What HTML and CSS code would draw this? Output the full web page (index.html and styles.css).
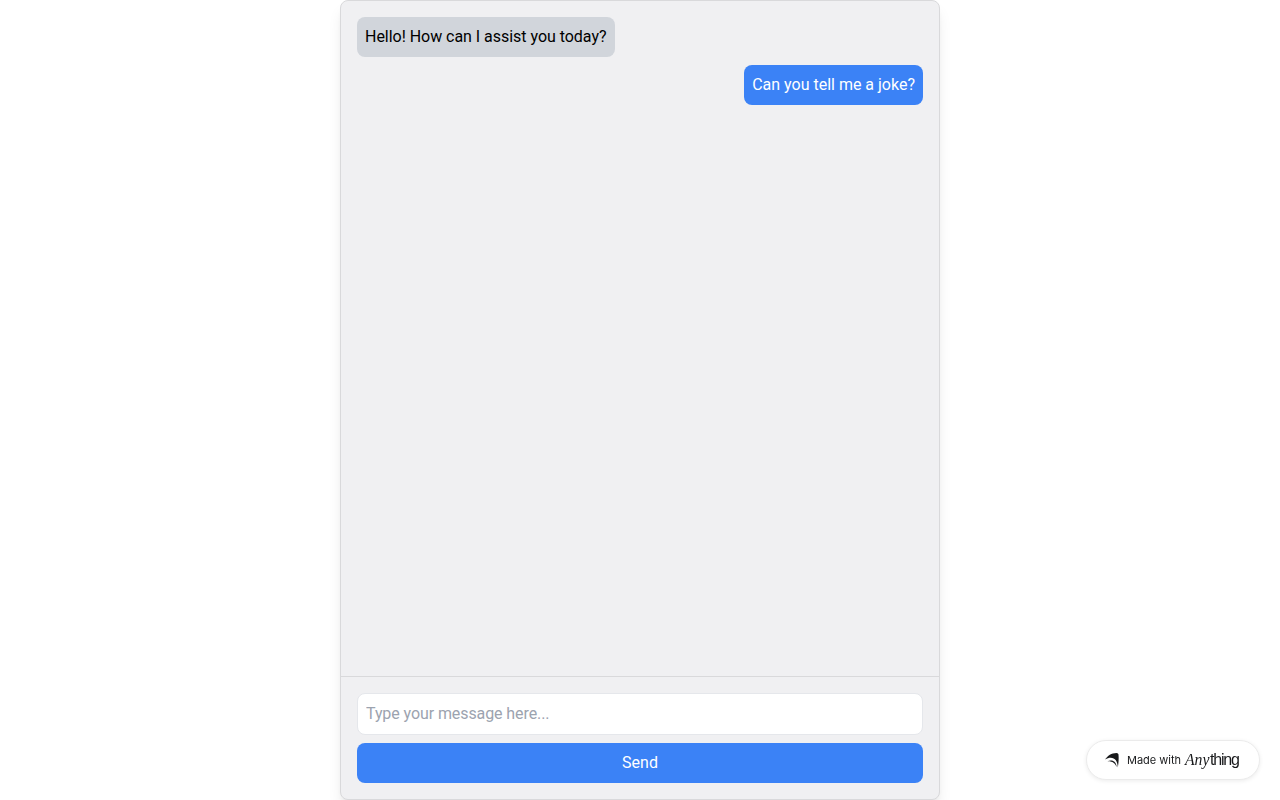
FILE: index.html
```html
<!DOCTYPE html>
<html lang="en">
<head>
  <meta charset="utf-8">
  <title>Chat</title>
  <link rel="stylesheet" href="styles.css">
</head>
<body>
  <div class="chat">
    <div class="messages">
      <div class="message bot">Hello! How can I assist you today?</div>
      <div class="message user">Can you tell me a joke?</div>
    </div>
    <form class="composer" onsubmit="return false">
      <input class="composer-input" type="text" placeholder="Type your message here...">
      <button class="send" type="submit">Send</button>
    </form>
  </div>

  <a class="badge" href="#">
    <svg class="badge-icon" width="14" height="15" viewBox="0 0 14 15" fill="#18191b">
      <path d="M0 6.6C2.6 2.8 6.5 0 11.5 0Q13.4 0 13.5 1.5C13.9 6 13.6 10 12.8 14.6C12.8 6.1 7.4 2.3 0 6.6Z"/>
      <path d="M2.4 8.2C7.6 5.9 11.4 8.8 11.7 14C10 10 7.2 7.9 2.4 8.2Z"/>
    </svg>
    <span class="badge-text">Made with</span>
    <span class="wordmark"><span class="wordmark-any">Any</span><span class="wordmark-thing">thing</span></span>
  </a>
</body>
</html>
```
FILE: styles.css
```css
* {
  box-sizing: border-box;
}

body {
  margin: 0;
  background: #ffffff;
  font-family: Roboto, sans-serif;
  font-size: 16px;
  line-height: 24px;
  color: #000000;
}

.chat {
  display: flex;
  flex-direction: column;
  width: 600px;
  height: 100vh;
  margin: 0 auto;
  background: #f0f0f2;
  border: 1px solid #d9d9db;
  border-radius: 8px;
  box-shadow: 0 10px 15px -3px rgba(0, 0, 0, 0.1), 0 4px 6px -4px rgba(0, 0, 0, 0.1);
}

.messages {
  display: flex;
  flex: 1;
  flex-direction: column;
  gap: 8px;
  padding: 16px;
}

.message {
  padding: 8px;
  border-radius: 8px;
}

.bot {
  align-self: flex-start;
  background: #d1d5db;
  letter-spacing: -0.03px;
}

.user {
  align-self: flex-end;
  background: #3b82f6;
  color: #ffffff;
}

.composer {
  display: flex;
  flex-direction: column;
  gap: 8px;
  padding: 16px;
  border-top: 1px solid #d9d9db;
}

.composer-input {
  height: 42px;
  padding: 7px 8px 9px;
  border: 1px solid #e5e7eb;
  border-radius: 8px;
  background: #ffffff;
  font: inherit;
  letter-spacing: -0.09px;
}

.composer-input::placeholder {
  color: #9ca3af;
}

.send {
  height: 40px;
  padding: 8px;
  border: none;
  border-radius: 8px;
  background: #3b82f6;
  color: #ffffff;
  font: inherit;
  cursor: pointer;
}

/* Floating badge */
.badge {
  position: fixed;
  right: 20px;
  bottom: 20px;
  display: flex;
  align-items: center;
  width: 174px;
  height: 40px;
  padding-left: 18px;
  border: 1px solid #ebebeb;
  border-radius: 20px;
  background: #ffffff;
  box-shadow: 0 1px 4px rgba(0, 0, 0, 0.08);
  color: #18191b;
  text-decoration: none;
  white-space: nowrap;
}

.badge-icon {
  margin-right: 8px;
}

.badge-text {
  width: 58px;
  font-family: Inter, sans-serif;
  font-size: 11px;
}

.wordmark {
  display: flex;
  align-items: baseline;
  padding-bottom: 2px;
}

.wordmark-any {
  width: 25px;
  font-family: "Liberation Serif", serif;
  font-size: 17.5px;
  font-style: italic;
  transform: scaleX(0.9);
  transform-origin: left;
}

.wordmark-thing {
  font-family: "Liberation Sans", Arial, sans-serif;
  font-size: 16px;
  letter-spacing: -1.2px;
}
```
